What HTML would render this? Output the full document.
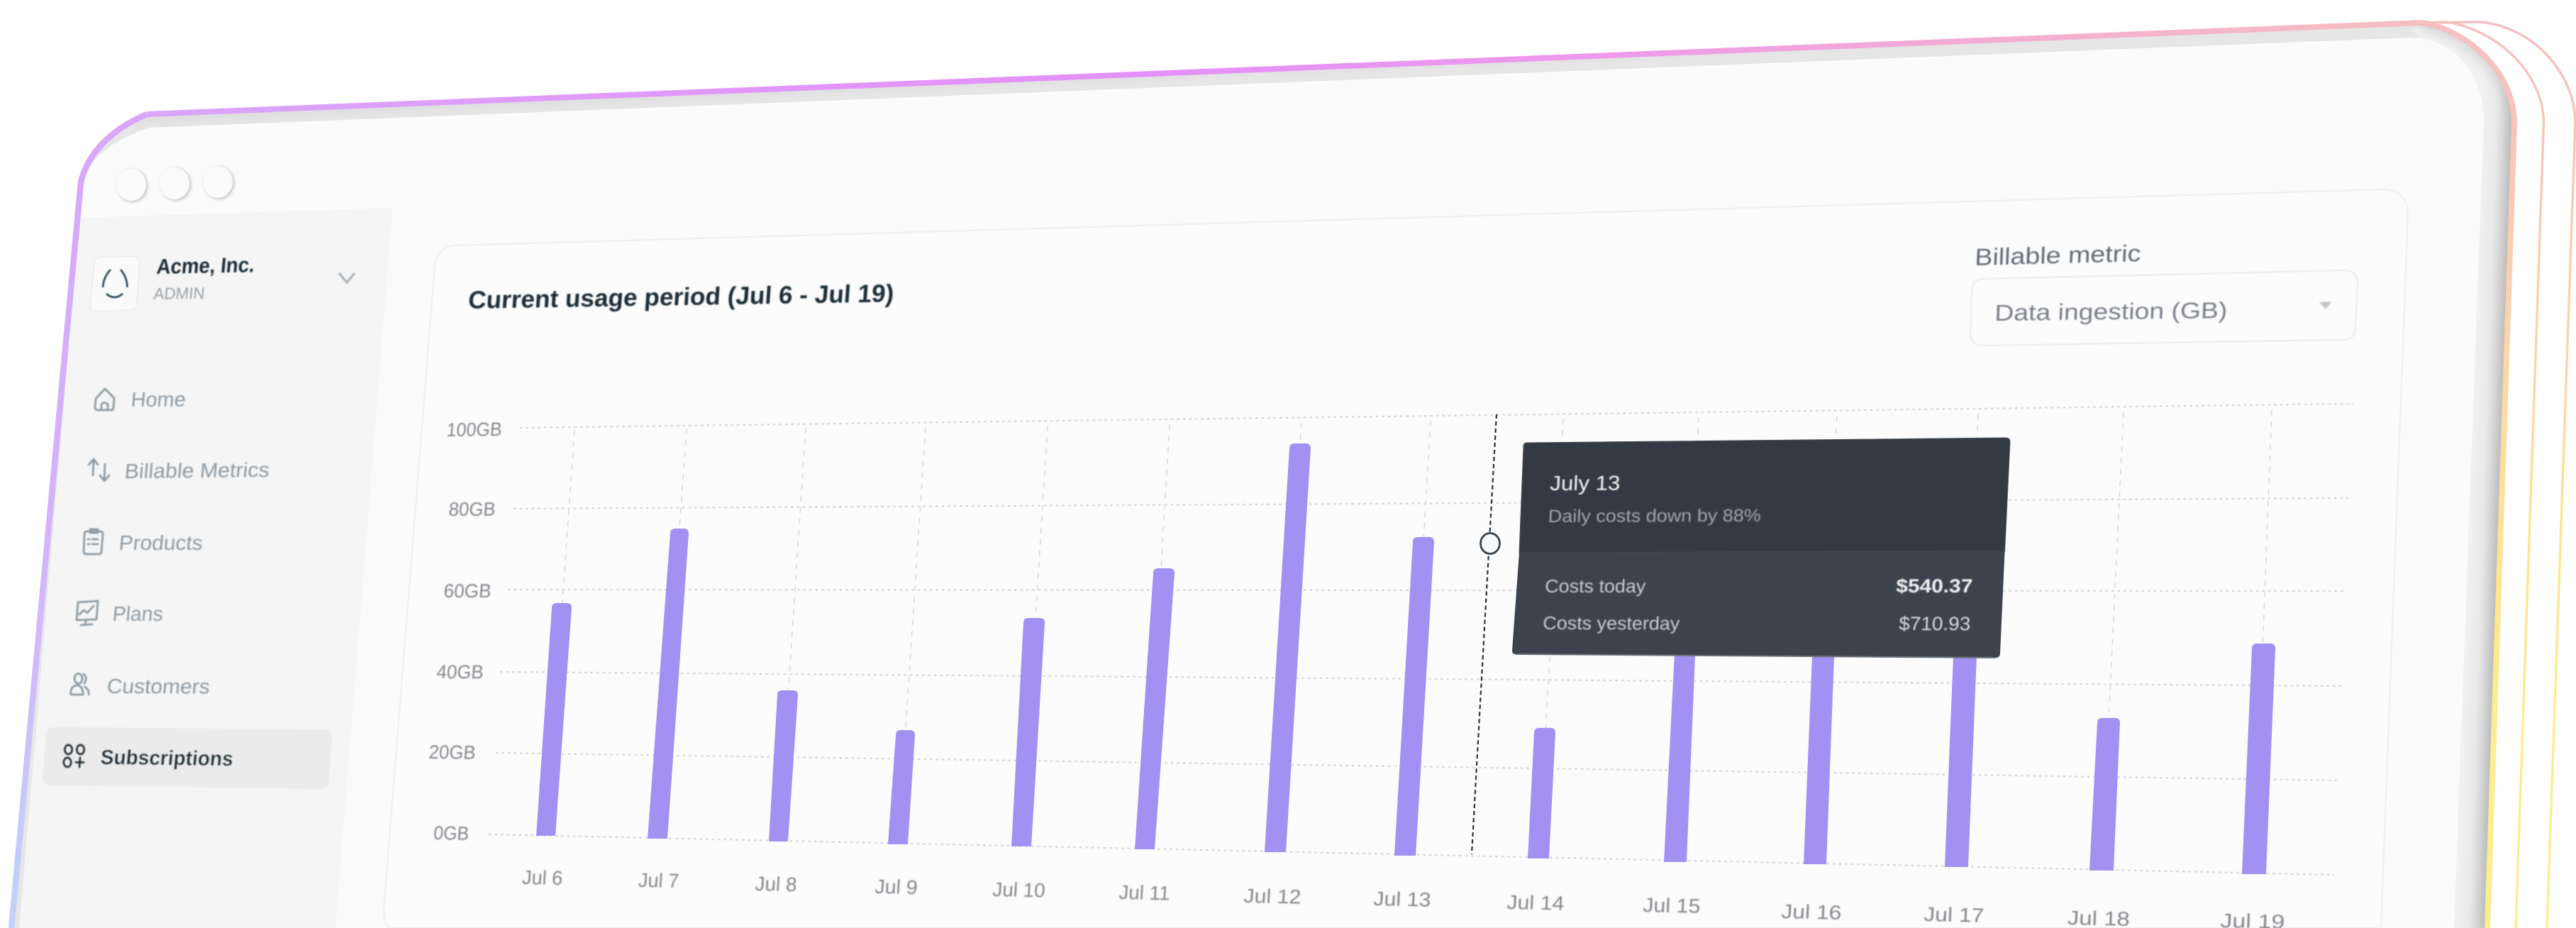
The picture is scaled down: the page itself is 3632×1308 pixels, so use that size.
<!DOCTYPE html>
<html>
<head>
<meta charset="utf-8">
<style>
html,body{margin:0;padding:0;background:#fff;width:3632px;height:1308px;overflow:hidden}
svg{display:block;position:absolute;left:0;top:0}
text{font-family:"Liberation Sans",sans-serif}
</style>
</head>
<body>
<svg width="3632" height="1308" viewBox="0 0 3632 1308" xmlns="http://www.w3.org/2000/svg">
<defs>
<linearGradient id="gL" gradientUnits="userSpaceOnUse" x1="0" y1="160" x2="0" y2="1308">
<stop offset="0" stop-color="#d9a6fa"/><stop offset=".6" stop-color="#d4b6fa"/><stop offset="1" stop-color="#c0d2fb"/>
</linearGradient>
<linearGradient id="gT" gradientUnits="userSpaceOnUse" x1="207" y1="0" x2="3415" y2="0">
<stop offset="0" stop-color="#d9a6fa"/><stop offset=".3" stop-color="#e395fb"/><stop offset=".45" stop-color="#e590fa"/><stop offset=".65" stop-color="#ef9aea"/><stop offset=".82" stop-color="#f4aed0"/><stop offset="1" stop-color="#f5bfc2"/>
</linearGradient>
<linearGradient id="gR" gradientUnits="userSpaceOnUse" x1="0" y1="30" x2="0" y2="1000">
<stop offset="0" stop-color="#f5bfc2"/><stop offset=".2" stop-color="#f7c7b8"/><stop offset=".48" stop-color="#fbd6a8"/><stop offset=".8" stop-color="#fde690"/><stop offset="1" stop-color="#fdec90"/>
</linearGradient>
<linearGradient id="gBand" gradientUnits="userSpaceOnUse" x1="3482" y1="700" x2="3523" y2="701.4">
<stop offset="0" stop-color="#f1f1f1"/><stop offset=".5" stop-color="#e8e8e8"/><stop offset=".85" stop-color="#d2d2d2"/><stop offset="1" stop-color="#c4c4c4"/>
</linearGradient>
<linearGradient id="gTop" gradientUnits="userSpaceOnUse" x1="1800" y1="88" x2="1801" y2="110">
<stop offset="0" stop-color="#dcdcdc"/><stop offset="1" stop-color="#e6e6e6"/>
</linearGradient>
<clipPath id="cF"><path d="M16 1308 L114 257 C122 222 150 185 207 161 L3415 32 C3470 40 3545 95 3545 175 L3507 1308 Z"/></clipPath>
<filter id="b1" x="-5%" y="-5%" width="110%" height="110%"><feGaussianBlur stdDeviation="0.7"/></filter>
<filter id="b8" x="-20%" y="-20%" width="140%" height="140%"><feGaussianBlur stdDeviation="8"/></filter>
<filter id="b3" x="-30%" y="-30%" width="160%" height="160%"><feGaussianBlur stdDeviation="2"/></filter>
</defs>

<!-- back outlines -->
<path d="M3440 32 L3499 31 C3575 40 3630 105 3631 172 L3591 1308" fill="none" stroke="url(#gR)" stroke-width="3.4"/>
<path d="M3420 32 L3450 31 C3530 45 3586 110 3586.5 172 L3547 1308" fill="none" stroke="url(#gR)" stroke-width="3.4"/>

<!-- slab -->
<g clip-path="url(#cF)">
<rect x="0" y="0" width="3632" height="1308" fill="url(#gTop)"/>
<path d="M3400 40 L3620 40 L3620 1308 L3460 1308 L3500 170 Z" fill="url(#gBand)"/>
<path d="M3415 32 C3470 40 3545 95 3545 175 L3507 1308" fill="none" stroke="#b4b4b4" stroke-width="14" filter="url(#b8)" opacity=".6"/>
</g>

<!-- panel -->
<path d="M27 1308 L116 265 C122 232 142 204 210 180 L3398 53 C3460 53 3502 105 3502 170 L3460 1308 Z" fill="#fbfbfb"/>

<!-- sidebar -->
<path d="M113 307 L553.6 293 L473 1308 L27 1308 Z" fill="#f5f5f5"/>

<!-- frame gradient stroke -->
<path d="M16 1308 L114 257 C122 222 150 185 207 161" fill="none" stroke="url(#gL)" stroke-width="8.5"/>
<path d="M207 161 L3415 32" fill="none" stroke="url(#gT)" stroke-width="8"/>
<path d="M3415 32 C3470 40 3545 95 3545 175 L3507 1308" fill="none" stroke="url(#gR)" stroke-width="8"/>

<!-- traffic lights -->
<g>
<ellipse cx="187" cy="262" rx="21.5" ry="23" fill="#c8c8c8" filter="url(#b3)"/>
<ellipse cx="248" cy="260" rx="21.5" ry="23" fill="#c8c8c8" filter="url(#b3)"/>
<ellipse cx="309" cy="258" rx="21.5" ry="23" fill="#c8c8c8" filter="url(#b3)"/>
<ellipse cx="185" cy="260.5" rx="21" ry="22.5" fill="#fbfbfb"/>
<ellipse cx="246" cy="258.5" rx="21" ry="22.5" fill="#fbfbfb"/>
<ellipse cx="307" cy="256.5" rx="21" ry="22.5" fill="#fbfbfb"/>
</g>

<!-- card -->
<path d="M541 1283 L613 375 Q616 348 642 346 L3361 267 Q3393 268 3395 300 L3357 1308 L549 1308 Q541 1300 541 1283 Z" fill="#fcfcfc" stroke="#f1f1f1" stroke-width="2.2"/>

<!-- logo tile -->
<path d="M143 362 L187 361 Q197 361 197 371 L193 427 Q193 436 183 437 L137 439 Q127 439 127 429 L133 372 Q133 362 143 362 Z" fill="#fafafa" stroke="#eeeeee" stroke-width="2"/>
<g fill="none" stroke="#274653" stroke-width="2.6" filter="url(#b1)">
<path d="M156 380 Q146 390 145 405"/>
<path d="M170 380 Q179 390 179.5 405"/>
<path d="M150 414 Q161 424 173 414"/>
</g>

<g filter="url(#b1)">
<!-- sidebar header text -->
<text transform="matrix(1 -.02 -.09 1 220 386)" font-size="30" font-weight="700" fill="#1e2d37" textLength="138" lengthAdjust="spacingAndGlyphs">Acme, Inc.</text>
<text transform="matrix(1 -.015 -.09 1 216 422)" font-size="23" fill="#9aa3a8" textLength="72" lengthAdjust="spacingAndGlyphs">ADMIN</text>
<path d="M478 385 L489 398 L500 385" fill="none" stroke="#aab3b8" stroke-width="3.2"/>

<!-- nav -->
<text transform="matrix(1 -.005 -.09 1 184 573)" font-size="29" fill="#8f9ba3" textLength="77" lengthAdjust="spacingAndGlyphs">Home</text>
<text transform="matrix(1 -.01 -.09 1 175 674)" font-size="29" fill="#8f9ba3" textLength="204" lengthAdjust="spacingAndGlyphs">Billable Metrics</text>
<text transform="matrix(1 0 -.09 1 167 775)" font-size="29" fill="#8f9ba3" textLength="118" lengthAdjust="spacingAndGlyphs">Products</text>
<text transform="matrix(1 0 -.09 1 158 875)" font-size="29" fill="#8f9ba3" textLength="71" lengthAdjust="spacingAndGlyphs">Plans</text>
<text transform="matrix(1 .004 -.09 1 150 977)" font-size="29" fill="#8f9ba3" textLength="145" lengthAdjust="spacingAndGlyphs">Customers</text>

<g fill="none" stroke="#8f9ba3" stroke-width="2.8" stroke-linecap="round" stroke-linejoin="round">
<path d="M135 562 L148 548 L161 561 L160 574 Q160 578 156 578 L138 578 Q134 578 134 574 Z M143 578 L143 570 Q147 565 152 570 L152 578"/>
<path d="M131 670 L132 648 M125 655 L132 647 L138 655"/>
<path d="M148 654 L147 677 M141 670 L147 678 L154 670"/>
<path d="M123 749 L141 749 Q145 749 145 753 L143 777 Q143 781 139 781 L122 781 Q118 781 118 777 L119 753 Q119 749 123 749 Z"/>
<path d="M127 751 L127 746 L138 746 L138 751 Z"/>
<path d="M124 760 L126 760 M130 760 L138 760 M124 767 L126 767 M130 767 L138 767"/>
<path d="M110 849 L138 847 L136 873 L108 874 Z"/>
<path d="M112 866 L118 860 L123 864 L132 854"/>
<path d="M121 875 L120 880 M114 881 L130 880"/>
<ellipse cx="110.5" cy="956.5" rx="5.5" ry="7"/>
<path d="M118 950 Q124 956 119 963"/>
<path d="M100 979 Q99 967 108 966 Q117 966 117 979 Z"/>
<path d="M119 968 Q126 971 125 979"/>
</g>

<!-- Subscriptions -->
<path d="M77 1025 L456 1028 Q468 1028 468 1040 L464 1100 Q464 1112 452 1112 L72 1107 Q60 1107 60 1095 L65 1037 Q65 1025 77 1025 Z" fill="#ebebeb"/>
<g fill="none" stroke="#1f2e38" stroke-width="3.2" stroke-linecap="round">
<ellipse cx="96.5" cy="1056.5" rx="5.2" ry="6.5"/>
<ellipse cx="113.5" cy="1056.5" rx="5.2" ry="6.5"/>
<ellipse cx="95" cy="1074.5" rx="5.2" ry="6.5"/>
<path d="M113 1068 L112 1081 M107 1074.5 L118 1074.5"/>
</g>
<text transform="matrix(1 .012 -.09 1 141 1077)" font-size="29" font-weight="700" fill="#1f2e38" textLength="187" lengthAdjust="spacingAndGlyphs">Subscriptions</text>

<!-- card header -->
<text transform="matrix(1 -.016 -.07 1 659.5 435)" font-size="35" font-weight="700" fill="#1e2e38" textLength="600" lengthAdjust="spacingAndGlyphs">Current usage period (Jul 6 - Jul 19)</text>
<text transform="matrix(1 -.025 -.04 1 2784 374)" font-size="33" fill="#636a74" textLength="234" lengthAdjust="spacingAndGlyphs">Billable metric</text>
</g>

<!-- select -->
<path d="M2800 393 L3304 381 Q3324 381 3324 399 L3321 461 Q3321 479 3303 479 L2796 487 Q2778 487 2778 469 L2780 411 Q2780 393 2800 393 Z" fill="#fcfcfc" stroke="#f0f0f0" stroke-width="2.6"/>
<g filter="url(#b1)">
<text transform="matrix(1 -.012 -.04 1 2812 452)" font-size="32" fill="#7a7f88" textLength="328" lengthAdjust="spacingAndGlyphs">Data ingestion (GB)</text>
<path d="M3270 426 L3288 425 L3279 436 Z" fill="#c6c6ce"/>
</g>

<!-- grid -->
<g fill="none" stroke="#dadada" stroke-width="2.4" stroke-dasharray="3.5 5">
<path d="M733 603 L3318 569"/>
<path d="M724 717 L3312 702"/>
<path d="M716 831 L3307 833"/>
<path d="M705 947 L3302 967"/>
<path d="M699 1061 L3297 1100"/>
<path d="M689 1176 L3291 1233"/>
</g>
<g fill="none" stroke="#dcdcdc" stroke-width="1.6" stroke-dasharray="8 8">
<path d="M810 606 L769.5 1178"/>
<path d="M968 604 L927 1182"/>
<path d="M1136 603 L1097.5 1186"/>
<path d="M1305 602 L1266 1190"/>
<path d="M1477 600 L1440 1193"/>
<path d="M1649 598 L1614 1197"/>
<path d="M1835 596 L1798 1201"/>
<path d="M2017 593 L1981 1206"/>
<path d="M2204 590 L2169 1210"/>
<path d="M2395 588 L2362 1215"/>
<path d="M2590 587 L2559 1218"/>
<path d="M2789 583 L2758.5 1222"/>
<path d="M2994 581 L2963 1227"/>
<path d="M3203 578 L3178 1232"/>
</g>

<!-- bars -->
<g fill="#a290f2">
<path d="M756 1178 L778 857 Q778 850 785 850 L799 850 Q806 850 806 857 L783 1178 Z"/>
<path d="M913 1182 L945 752 Q945 745 952 745 L964 745 Q971 745 971 752 L941 1182 Z"/>
<path d="M1084 1186 L1096 980 Q1096 973 1103 973 L1118 973 Q1125 973 1125 980 L1111 1186 Z"/>
<path d="M1252 1190 L1263 1036 Q1263 1029 1270 1029 L1283 1029 Q1290 1029 1290 1036 L1280 1190 Z"/>
<path d="M1426 1193 L1443 878 Q1443 871 1450 871 L1466 871 Q1473 871 1473 878 L1454 1193 Z"/>
<path d="M1600 1197 L1626 808 Q1626 801 1633 801 L1649 801 Q1656 801 1656 808 L1628 1197 Z"/>
<path d="M1783 1201 L1818 632 Q1818 625 1825 625 L1841 625 Q1848 625 1848 632 L1813 1201 Z"/>
<path d="M1966 1206 L1992 764 Q1992 757 1999 757 L2015 757 Q2022 757 2022 764 L1996 1206 Z"/>
<path d="M2154 1210 L2163 1033 Q2163 1026 2170 1026 L2186 1026 Q2193 1026 2193 1033 L2184 1210 Z"/>
<path d="M2346 1215 L2362 900 L2391 900 L2378 1215 Z"/>
<path d="M2543 1218 L2556 900 L2587 900 L2575 1218 Z"/>
<path d="M2742 1222 L2755 900 L2788 900 L2775 1222 Z"/>
<path d="M2946 1227 L2957 1019 Q2957 1012 2964 1012 L2982 1012 Q2989 1012 2989 1019 L2980 1227 Z"/>
<path d="M3161 1232 L3175 914 Q3175 907 3182 907 L3201 907 Q3208 907 3208 914 L3195 1232 Z"/>
</g>

<!-- crosshair -->
<path d="M2110 584 L2075 1204" fill="none" stroke="#25333d" stroke-width="2.2" stroke-dasharray="6 4"/>
<ellipse cx="2101" cy="766" rx="13.5" ry="14.5" fill="#f8f8f8" stroke="#36444d" stroke-width="2.8"/>

<g filter="url(#b1)">
<!-- y labels -->
<g font-size="27" fill="#84878c">
<text transform="matrix(1 -.012 -.08 1 629 615)" textLength="78" lengthAdjust="spacingAndGlyphs">100GB</text>
<text transform="matrix(1 -.006 -.08 1 632 727)" textLength="66" lengthAdjust="spacingAndGlyphs">80GB</text>
<text transform="matrix(1 0 -.08 1 625 842)" textLength="67" lengthAdjust="spacingAndGlyphs">60GB</text>
<text transform="matrix(1 .006 -.08 1 615 956)" textLength="66" lengthAdjust="spacingAndGlyphs">40GB</text>
<text transform="matrix(1 .013 -.08 1 604 1069)" textLength="66" lengthAdjust="spacingAndGlyphs">20GB</text>
<text transform="matrix(1 .02 -.08 1 610.6 1183)" textLength="50" lengthAdjust="spacingAndGlyphs">0GB</text>
</g>
<!-- x labels -->
<g font-size="28" fill="#84878c">
<text transform="matrix(1 .022 -.07 1 735.6 1246)" textLength="57" lengthAdjust="spacingAndGlyphs">Jul 6</text>
<text transform="matrix(1 .022 -.07 1 899.5 1250)" textLength="57" lengthAdjust="spacingAndGlyphs">Jul 7</text>
<text transform="matrix(1 .022 -.06 1 1064 1255)" textLength="59" lengthAdjust="spacingAndGlyphs">Jul 8</text>
<text transform="matrix(1 .022 -.06 1 1233 1259)" textLength="60" lengthAdjust="spacingAndGlyphs">Jul 9</text>
<text transform="matrix(1 .022 -.06 1 1399 1263)" textLength="74" lengthAdjust="spacingAndGlyphs">Jul 10</text>
<text transform="matrix(1 .022 -.055 1 1577 1267)" textLength="72" lengthAdjust="spacingAndGlyphs">Jul 11</text>
<text transform="matrix(1 .022 -.055 1 1753 1272)" textLength="81" lengthAdjust="spacingAndGlyphs">Jul 12</text>
<text transform="matrix(1 .022 -.05 1 1936 1276)" textLength="81" lengthAdjust="spacingAndGlyphs">Jul 13</text>
<text transform="matrix(1 .022 -.05 1 2124 1281)" textLength="81" lengthAdjust="spacingAndGlyphs">Jul 14</text>
<text transform="matrix(1 .022 -.045 1 2316 1285)" textLength="81" lengthAdjust="spacingAndGlyphs">Jul 15</text>
<text transform="matrix(1 .022 -.045 1 2511 1294)" textLength="85" lengthAdjust="spacingAndGlyphs">Jul 16</text>
<text transform="matrix(1 .022 -.04 1 2712 1298)" textLength="85" lengthAdjust="spacingAndGlyphs">Jul 17</text>
<text transform="matrix(1 .022 -.04 1 2914.5 1303)" textLength="88" lengthAdjust="spacingAndGlyphs">Jul 18</text>
<text transform="matrix(1 .022 -.04 1 3130 1307)" textLength="91" lengthAdjust="spacingAndGlyphs">Jul 19</text>
</g>
</g>

<!-- tooltip -->
<path d="M2153 624 L2828 617 Q2834 617 2834 623 L2826.6 777 L2142 779 L2148 629 Q2148 624 2153 624 Z" fill="#343a43" stroke="#4f555d" stroke-width="1"/>
<path d="M2142 779 L2826.6 777 L2820 921 Q2820 927 2814 927 L2137 922 Q2132 922 2132 917 Z" fill="#3c434c"/>
<path d="M2137 922 L2814 927" fill="none" stroke="#6a7077" stroke-width="2"/>
<g filter="url(#b1)">
<text transform="matrix(1 -.004 -.04 1 2185 691)" font-size="29" fill="#f5f5f5" textLength="99" lengthAdjust="spacingAndGlyphs">July 13</text>
<text transform="matrix(1 -.004 -.04 1 2182.5 736)" font-size="25" fill="#a0a5ab" textLength="300" lengthAdjust="spacingAndGlyphs">Daily costs down by 88%</text>
<text transform="matrix(1 0 -.04 1 2178 835)" font-size="26" fill="#c8cbce" textLength="142" lengthAdjust="spacingAndGlyphs">Costs today</text>
<text transform="matrix(1 0 -.04 1 2673 835)" font-size="27" font-weight="700" fill="#f0f0f0" textLength="108" lengthAdjust="spacingAndGlyphs">$540.37</text>
<text transform="matrix(1 .003 -.04 1 2175 887)" font-size="26" fill="#c8cbce" textLength="193" lengthAdjust="spacingAndGlyphs">Costs yesterday</text>
<text transform="matrix(1 .003 -.04 1 2677 888)" font-size="27" fill="#d8dadc" textLength="101" lengthAdjust="spacingAndGlyphs">$710.93</text>
</g>
</svg>
</body>
</html>
